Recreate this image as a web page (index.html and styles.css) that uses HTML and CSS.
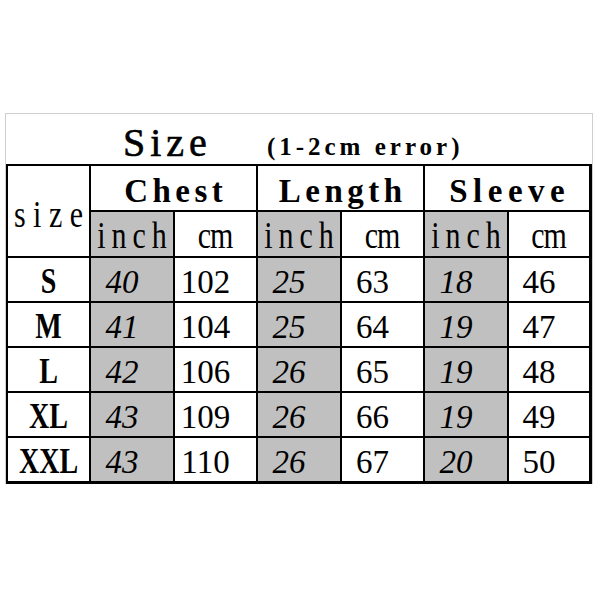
FILE: index.html
```html
<!DOCTYPE html>
<html>
<head>
<meta charset="utf-8">
<title>Size chart</title>
<link rel="stylesheet" href="styles.css">
</head>
<body>
<div class="sheet">
  <div class="title">
    <span class="title-main">Size</span>
    <span class="title-note">(1-2cm error)</span>
  </div>
  <div class="grid">
    <div class="cell size-head"><span class="unit-t unit-size">size</span></div>
    <div class="cell group"><span class="group-t">Chest</span></div>
    <div class="cell group"><span class="group-t">Length</span></div>
    <div class="cell group"><span class="group-t group-wide">Sleeve</span></div>

    <div class="cell unit shade"><span class="unit-t unit-inch">inch</span></div>
    <div class="cell unit"><span class="unit-t">cm</span></div>
    <div class="cell unit shade"><span class="unit-t unit-inch">inch</span></div>
    <div class="cell unit"><span class="unit-t">cm</span></div>
    <div class="cell unit shade"><span class="unit-t unit-inch">inch</span></div>
    <div class="cell unit"><span class="unit-t">cm</span></div>

    <div class="cell sz"><span class="sz-t">S</span></div>
    <div class="cell num shade"><span class="inch-t">40</span></div>
    <div class="cell num"><span class="cm-t">102</span></div>
    <div class="cell num shade"><span class="inch-t">25</span></div>
    <div class="cell num"><span class="cm-t">63</span></div>
    <div class="cell num shade"><span class="inch-t">18</span></div>
    <div class="cell num"><span class="cm-t">46</span></div>

    <div class="cell sz"><span class="sz-t">M</span></div>
    <div class="cell num shade"><span class="inch-t">41</span></div>
    <div class="cell num"><span class="cm-t">104</span></div>
    <div class="cell num shade"><span class="inch-t">25</span></div>
    <div class="cell num"><span class="cm-t">64</span></div>
    <div class="cell num shade"><span class="inch-t">19</span></div>
    <div class="cell num"><span class="cm-t">47</span></div>

    <div class="cell sz"><span class="sz-t">L</span></div>
    <div class="cell num shade"><span class="inch-t">42</span></div>
    <div class="cell num"><span class="cm-t">106</span></div>
    <div class="cell num shade"><span class="inch-t">26</span></div>
    <div class="cell num"><span class="cm-t">65</span></div>
    <div class="cell num shade"><span class="inch-t">19</span></div>
    <div class="cell num"><span class="cm-t">48</span></div>

    <div class="cell sz"><span class="sz-t">XL</span></div>
    <div class="cell num shade"><span class="inch-t">43</span></div>
    <div class="cell num"><span class="cm-t">109</span></div>
    <div class="cell num shade"><span class="inch-t">26</span></div>
    <div class="cell num"><span class="cm-t">66</span></div>
    <div class="cell num shade"><span class="inch-t">19</span></div>
    <div class="cell num"><span class="cm-t">49</span></div>

    <div class="cell sz"><span class="sz-t">XXL</span></div>
    <div class="cell num shade"><span class="inch-t">43</span></div>
    <div class="cell num"><span class="cm-t">110</span></div>
    <div class="cell num shade"><span class="inch-t">26</span></div>
    <div class="cell num"><span class="cm-t">67</span></div>
    <div class="cell num shade"><span class="inch-t">20</span></div>
    <div class="cell num"><span class="cm-t">50</span></div>
  </div>
</div>
</body>
</html>
```

FILE: styles.css
```css
html, body {
  margin: 0;
  padding: 0;
  background: #fff;
}

body {
  color: #000;
  font-family: "Liberation Serif", serif;
}

.sheet {
  margin: 113px 0 0 5px;
  width: 586px;
  border: 1px solid #cfcfcf;
  border-bottom: none;
}

.title {
  height: 50px;
  display: flex;
  align-items: flex-end;
  padding-left: 117px;
}

.title-main {
  display: inline-block;
  font-family: "Liberation Serif", serif;
  font-size: 40px;
  line-height: 1;
  letter-spacing: 5px;
  margin-right: -5px;
  margin-bottom: 1px;
  -webkit-text-stroke: 0.6px #000;
}

.title-note {
  display: inline-block;
  font-family: "Liberation Serif", serif;
  font-size: 25px;
  font-weight: bold;
  line-height: 1;
  letter-spacing: 4px;
  margin-right: -4px;
  margin-left: 60px;
  margin-bottom: 5px;
}

.grid {
  display: grid;
  grid-template-columns: 83px 84px 83px 84px 83px 84px 82px;
  grid-template-rows: 46px 46px 45px 45px 45px 45px 45px;
  border-left: 2px solid #000;
  border-top: 2px solid #000;
  border-right: 1px solid #000;
  border-bottom: 1px solid #000;
}

.cell {
  border-right: 2px solid #000;
  border-bottom: 2px solid #000;
  display: flex;
  justify-content: center;
  align-items: flex-end;
  background: #fff;
}

.shade {
  background: #c0c0c0;
}

.size-head {
  grid-row: span 2;
  padding-bottom: 24px;
}

.group {
  grid-column: span 2;
  padding-bottom: 2px;
}

.group-t {
  display: inline-block;
  font-family: "Liberation Serif", serif;
  font-weight: bold;
  font-size: 33px;
  line-height: 1;
  letter-spacing: 4.5px;
  margin-right: -4.5px;
}

.group-wide {
  letter-spacing: 5.5px;
  margin-right: -5.5px;
}

.unit {
  padding-bottom: 3px;
}

.unit-t {
  display: inline-block;
  font-family: "Liberation Serif", serif;
  font-size: 30px;
  line-height: 1;
  letter-spacing: -1px;
  margin-right: 1px;
  transform: scaleY(1.25);
  transform-origin: 50% 84%;
}

.unit-inch {
  letter-spacing: 6px;
  margin-right: -6px;
}

.unit-size {
  letter-spacing: 7.5px;
  margin-right: -7.5px;
}

.sz {
  padding-bottom: 3px;
}

.sz-t {
  display: inline-block;
  font-family: "Liberation Serif", serif;
  font-weight: bold;
  font-size: 28px;
  line-height: 1;
  transform: scaleY(1.25);
  transform-origin: 50% 84%;
}

.num {
  padding-right: 20px;
  padding-bottom: 2px;
}

.inch-t,
.cm-t {
  display: inline-block;
  font-family: "Liberation Serif", serif;
  font-size: 33px;
  line-height: 1;
}

.inch-t {
  font-style: italic;
}
```
